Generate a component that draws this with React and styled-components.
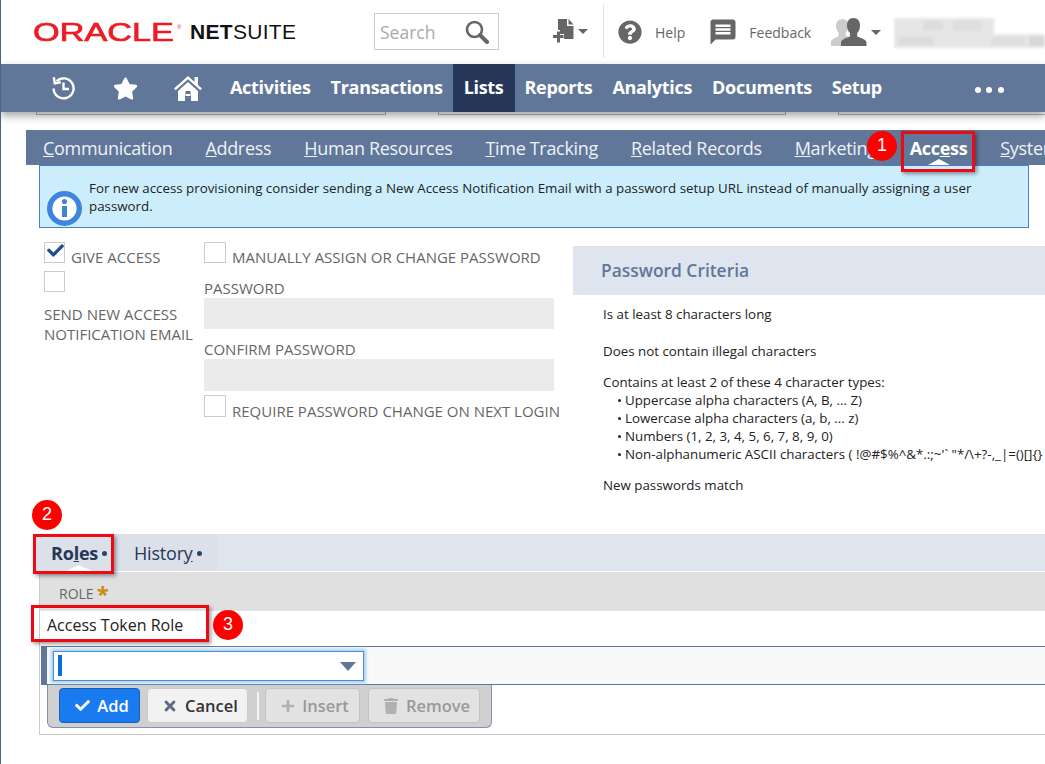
import React from 'react';
import styled, { createGlobalStyle } from 'styled-components';
import { FaStar, FaCheck, FaTimes, FaPlus, FaTrash, FaQuestionCircle } from 'react-icons/fa';
import { MdMessage } from 'react-icons/md';

const Global = createGlobalStyle`
  html, body { margin: 0; padding: 0; background: #fff; }
  * { box-sizing: border-box; }
  body { font-family: "Open Sans", "Noto Sans", sans-serif; }
`;

const Page = styled.div`
  position: relative;
  width: 1045px;
  height: 764px;
  overflow: hidden;
  background: #fff;
  border-left: 1px solid #4d6480;
`;

/* ---------- top header ---------- */
const Header = styled.header`
  display: flex;
  align-items: center;
  height: 64px;
  color: #666;
`;
const Logo = styled.div`
  display: flex;
  align-items: center;
  width: 373px;
  padding-left: 32px;
  flex: none;
`;
const OracleWord = styled.span`
  display: block;
  width: 144px;
  flex: none;
  font-family: "Liberation Sans", Arial, sans-serif;
  font-size: 25px;
  line-height: 24px;
  color: #ed1c24;
  -webkit-text-stroke: 0.7px #ed1c24;
  transform: scaleX(1.37);
  transform-origin: left center;
`;
const Registered = styled.span`
  width: 13px;
  flex: none;
  align-self: flex-start;
  font-family: "Liberation Sans", Arial, sans-serif;
  font-size: 6px;
  line-height: 14px;
  color: #ed1c24;
`;
const SuiteWord = styled.span`
  font-family: "Liberation Sans", Arial, sans-serif;
  font-size: 21px;
  line-height: 24px;
  letter-spacing: 0.3px;
  color: #111;
  b { font-weight: 700; }
`;
const SearchBox = styled.div`
  display: flex;
  align-items: center;
  justify-content: space-between;
  width: 125px;
  height: 37px;
  flex: none;
  margin-top: -1px;
  padding: 0 9px 0 5px;
  border: 1px solid #ccc;
  font-size: 17.5px;
  color: #aaa;
`;
const NewBlock = styled.div`
  display: flex;
  align-items: center;
  margin-left: 54px;
  width: 51px;
  height: 53px;
  flex: none;
  border-right: 1px solid #e2e2e2;
  margin-top: -1px;
`;
const Caret = styled.span`
  width: 0;
  height: 0;
  margin-left: ${p => p.$gap || 1}px;
  border-left: 5px solid transparent;
  border-right: 5px solid transparent;
  border-top: 5px solid #666;
`;
const HeadLink = styled.div`
  display: flex;
  align-items: center;
  gap: ${p => p.$gap}px;
  margin-left: ${p => p.$left}px;
  font-size: 14px;
  color: #666;
  flex: none;
`;
const UserBlock = styled.div`
  display: flex;
  align-items: center;
  margin-left: 20px;
  flex: none;
`;
const Blurred = styled.svg`
  display: block;
  margin-left: 12px;
  flex: none;
`;

/* ---------- main nav ---------- */
const Nav = styled.nav`
  position: relative;
  z-index: 2;
  display: flex;
  align-items: stretch;
  height: 48px;
  background: #607799;
  box-shadow: 0 4px 8px rgba(0, 0, 0, 0.35);
  padding-left: 44px;
`;
const NavIcon = styled.div`
  display: flex;
  align-items: center;
  justify-content: center;
  width: ${p => p.$w}px;
  margin-right: ${p => p.$mr || 0}px;
  color: #fff;
  flex: none;
`;
const NavItem = styled.div`
  display: flex;
  align-items: center;
  padding: 0 ${p => (p.$active ? 11 : 10)}px 2px;
  font-size: 18px;
  font-weight: 700;
  letter-spacing: -0.3px;
  color: #fff;
  background: ${p => (p.$active ? '#26375a' : 'transparent')};
`;
const Dots = styled.div`
  display: flex;
  align-items: center;
  gap: 5.5px;
  margin-left: 83px;
  padding-top: 4px;
  span {
    width: 6px;
    height: 6px;
    border-radius: 50%;
    background: #fff;
  }
`;
const Peek = styled.div`
  display: flex;
  height: 3px;
  padding-left: 35px;
  gap: 52px;
`;
const PeekBox = styled.div`
  width: ${p => p.$w}px;
  flex: none;
  border: 1px solid #b5b5b5;
  border-top: 0;
`;

/* ---------- record sub tabs ---------- */
const Tabs = styled.div`
  display: flex;
  align-items: center;
  gap: 33px;
  height: 35px;
  margin: 15px 0 0 25px;
  padding-left: 17px;
  background: #607799;
  white-space: nowrap;
  overflow: hidden;
`;
const Tab = styled.div`
  position: relative;
  height: 35px;
  line-height: 36px;
  font-size: 18px;
  letter-spacing: -0.32px;
  font-weight: ${p => (p.$active ? 700 : 400)};
  color: ${p => (p.$active ? '#fff' : '#eef1f6')};
  ${p => p.$active && `
    &::after {
      content: '';
      position: absolute;
      left: 18px;
      bottom: 0;
      border-left: 11px solid transparent;
      border-right: 11px solid transparent;
      border-bottom: 6px solid #fff;
    }
  `}
`;
const InfoBox = styled.div`
  position: relative;
  height: 63px;
  width: 990px;
  margin-left: 38px;
  padding: 13px 20px 0 49px;
  background: #cceefc;
  border: 1px solid #4a7fcf;
  font-size: 13.33px;
  line-height: 18px;
  color: #222;
`;
const InfoIcon = styled.svg`
  position: absolute;
  left: 7px;
  top: 25px;
`;

/* ---------- form ---------- */
const Form = styled.section`
  display: flex;
  height: 306px;
`;
const ColA = styled.div`
  width: 160px;
  margin-left: 43px;
  padding-top: 14px;
  flex: none;
`;
const ColB = styled.div`
  width: 357px;
  padding-top: 14px;
  flex: none;
`;
const CheckRow = styled.div`
  display: flex;
  align-items: flex-end;
  gap: 6px;
  height: ${p => p.$h || 21}px;
  margin-top: ${p => p.$mt || 0}px;
`;
const Check = styled.div`
  position: relative;
  width: ${p => p.$w || 21}px;
  height: ${p => p.$h || 21}px;
  flex: none;
  border: 1px solid #ccc;
  background: #fff;
  color: #1f4f8f;
  svg { position: absolute; left: 2px; top: -1px; }
`;
const CheckLabel = styled.span`
  font-size: 15px;
  line-height: 20px;
  color: #666;
  white-space: nowrap;
  transform: translateY(4px);
`;
const FieldLabel = styled.div`
  margin-top: ${p => p.$mt || 0}px;
  font-size: 15px;
  line-height: 20px;
  color: #666;
  white-space: nowrap;
`;
const Field = styled.div`
  width: 350px;
  height: ${p => p.$h}px;
  background: #ebebeb;
`;
const Criteria = styled.aside`
  flex: 1;
  margin: 18px 0 0 12px;
  min-width: 0;
`;
const CriteriaHead = styled.div`
  display: flex;
  align-items: center;
  height: 49px;
  padding: 0 0 2px 28px;
  background: #dfe5ef;
  font-size: 17.4px;
  font-weight: 600;
  color: #607799;
`;
const CriteriaBody = styled.div`
  padding: 10px 0 0 30px;
  font-size: 13.33px;
  line-height: 18px;
  color: #222;
  white-space: nowrap;
`;
const Line = styled.div`
  margin-top: ${p => p.$mt || 0}px;
`;
const Bullet = styled.div`
  position: relative;
  padding-left: 22px;
  &::before {
    content: '';
    position: absolute;
    left: 15px;
    top: 8px;
    width: 3px;
    height: 3px;
    border-radius: 50%;
    background: #222;
  }
`;

/* ---------- roles machine ---------- */
const SubTabs = styled.div`
  display: flex;
  height: 37px;
  margin-left: 32px;
  background: #dfe5ef;
`;
const SubTab = styled.div`
  position: relative;
  display: flex;
  align-items: center;
  height: 37px;
  width: ${p => p.$w}px;
  padding-left: ${p => p.$pl}px;
  background: #dce0e8;
  font-size: 18px;
  letter-spacing: -0.2px;
  font-weight: ${p => (p.$active ? 700 : 400)};
  color: #26375a;
  i {
    width: 5px;
    height: 5px;
    margin-left: 4px;
    margin-top: 2px;
    border-radius: 50%;
    background: #2d4266;
  }
  ${p => p.$active && `
    &::after {
      content: '';
      position: absolute;
      left: 33px;
      bottom: 0;
      border-left: 13px solid transparent;
      border-right: 13px solid transparent;
      border-bottom: 6px solid #fff;
    }
  `}
`;
const Machine = styled.div`
  height: 163px;
  margin: 1px 0 0 38px;
  border-left: 1px solid #ccc;
  border-bottom: 1px solid #ccc;
`;
const ColHead = styled.div`
  display: flex;
  align-items: center;
  height: 39px;
  padding: 4px 0 0 19px;
  background: #e0e0e0;
  font-size: 14px;
  color: #666;
  b {
    align-self: flex-start;
    margin: 6px 0 0 3px;
    font-size: 22px;
    line-height: 22px;
    font-weight: 700;
    color: #c98a10;
  }
`;
const DataRow = styled.div`
  height: 35px;
  padding-left: 7px;
  font-size: 16px;
  line-height: 28px;
  color: #222;
`;
const EditRow = styled.div`
  display: flex;
  align-items: center;
  height: 39px;
  margin-left: 1px;
  padding-left: 6px;
  border-top: 1px solid #607799;
  border-bottom: 1px solid #607799;
  border-left: 6px solid #607799;
  background: #f9f9f9;
`;
const Select = styled.div`
  position: relative;
  width: 311px;
  height: 30px;
  background: #fff;
  border: 1px solid #4a90d9;
  box-shadow: 0 0 3px 2px #a4cdf5;
  &::before {
    content: '';
    position: absolute;
    left: 4px;
    top: 3px;
    width: 4px;
    height: 21px;
    background: #0a70d6;
  }
  &::after {
    content: '';
    position: absolute;
    right: 7px;
    top: 10px;
    border-left: 8px solid transparent;
    border-right: 8px solid transparent;
    border-top: 9px solid #607799;
  }
`;
const ButtonBar = styled.div`
  display: flex;
  align-items: center;
  width: 445px;
  height: 43px;
  margin-left: 7px;
  padding: 0 10px 1px 11px;
  background: #d0d0d0;
  border: 1px solid #7f92b0;
  border-top: 0;
  border-radius: 0 0 6px 6px;
`;
const Btn = styled.div`
  display: flex;
  align-items: center;
  justify-content: center;
  gap: 7px;
  width: ${p => p.$w}px;
  height: 35px;
  padding-left: 5px;
  margin-right: ${p => p.$mr || 7}px;
  flex: none;
  border-radius: 4px;
  border: 1px solid ${p => (p.$kind === 'primary' ? '#1560b8' : p.$kind === 'off' ? '#c4c4c4' : '#ccc')};
  background: ${p => (p.$kind === 'primary' ? '#1a7bf0' : p.$kind === 'off' ? '#e2e2e2' : '#f2f2f2')};
  color: ${p => (p.$kind === 'primary' ? '#fff' : p.$kind === 'off' ? '#999' : '#333')};
  font-size: 16.5px;
  font-weight: 600;
  svg { color: ${p => (p.$kind === 'primary' ? '#fff' : p.$kind === 'off' ? '#b0b0b0' : '#5c6b80')}; }
`;
const BtnSep = styled.div`
  width: 2px;
  height: 28px;
  margin: 0 6px 0 1px;
  flex: none;
  background: #f5f5f5;
`;

/* ---------- call-outs drawn over the screenshot ---------- */
const RedBox = styled.div`
  position: absolute;
  z-index: 5;
  left: ${p => p.$x}px;
  top: ${p => p.$y}px;
  width: ${p => p.$w}px;
  height: ${p => p.$h}px;
  border: 3px solid #ee0a14;
  box-shadow: 2px 2px 4px rgba(0, 0, 0, 0.4);
`;
const Badge = styled.div`
  position: absolute;
  z-index: 6;
  left: ${p => p.$x}px;
  top: ${p => p.$y}px;
  width: 30px;
  height: 30px;
  border-radius: 50%;
  background: #ff0000;
  color: #fff;
  font-family: "Liberation Sans", Arial, sans-serif;
  font-size: 18px;
  line-height: 29px;
  text-align: center;
`;

const HistoryIcon = () => (
  <svg width="25" height="26" viewBox="0 0 25 26" fill="none" stroke="#fff" strokeWidth="2.4">
    <path d="M5.6 6.2A10 10 0 1 1 2.6 13.500" />
    <path d="M2.800 2.200l1 6.200 6-1.200" strokeWidth="2.400" />
    <path d="M12.500 7.500v6.500h5.500" strokeWidth="2.400" />
  </svg>
);
const HomeIcon = () => (
  <svg width="28" height="25" viewBox="0 0 28 25" fill="#fff">
    <path d="M14 0L0 12.500l1.600 1.800L14 3.300l12.400 11 1.600-1.800-4-3.500V1h-3.500v5z" />
    <path d="M14 6L4 15v10h7v-7h6v7h7V15z M11.500 15h5v5h-5z" fillRule="evenodd" />
  </svg>
);
const SearchIcon = () => (
  <svg width="24" height="24" viewBox="0 0 24 24" fill="none" stroke="#666">
    <circle cx="9.500" cy="9.500" r="7.500" strokeWidth="2.600" />
    <path d="M15 15l7 7" strokeWidth="4" strokeLinecap="round" />
  </svg>
);
const NewDocIcon = () => (
  <svg width="24" height="25" viewBox="0 0 24 25" fill="#666">
    <path d="M5 0h9v7h6.500v13H11v-5H7v-4H5z" />
    <path d="M15.500 0l5 5.500h-5z" />
    <path d="M4 12.500h3V16h3.500v3H7v4.500H4V19H0v-3h4z" />
  </svg>
);
const UsersIcon = () => (
  <svg width="36" height="28" viewBox="0 0 36 28">
    <path fill="#ccc" d="M11.500 1c4 0 6 3 6 6.500 0 3-1.200 5.500-2.700 7v3l3 1.500V28H0v-4c0-2.500 3-3.500 7.500-5.500v-4c-1.500-1.500-2.500-4-2.500-7C5 4 7.500 1 11.500 1z" />
    <path fill="#666" d="M22.500 0C27 0 29 3.300 29 7.500c0 3.200-1.200 6-2.800 7.500v3.500c4 1.700 9.300 3 9.300 6V28H10v-3.500c0-3 5-4.300 9-6V15c-1.600-1.500-3-4.300-3-7.500C16 3.300 18 0 22.500 0z" />
  </svg>
);
const InfoGlyph = () => (
  <InfoIcon width="35" height="35" viewBox="0 0 35 35">
    <circle cx="17.500" cy="17.500" r="14.800" fill="#fff" stroke="#3f85dc" strokeWidth="5.400" />
    <circle cx="17.500" cy="10.500" r="2.600" fill="#3f85dc" />
    <rect x="15" y="15" width="5" height="11" fill="#3f85dc" />
  </InfoIcon>
);
const Blur = () => (
  <Blurred width="152" height="40" viewBox="0 0 152 40">
    <defs>
      <filter id="soft"><feGaussianBlur stdDeviation="1.800" /></filter>
    </defs>
    <g filter="url(#soft)">
      <rect x="1" y="6" width="100" height="16" fill="#e6e6e6" />
      <rect x="1" y="22" width="151" height="14" fill="#e6e6e6" />
      <rect x="30" y="9" width="20" height="9" fill="#dcdcdc" />
      <rect x="60" y="8" width="28" height="11" fill="#dedede" />
      <rect x="6" y="25" width="34" height="8" fill="#dcdcdc" />
      <rect x="98" y="25" width="34" height="8" fill="#dedede" />
      <rect x="136" y="24" width="16" height="10" fill="#d8d8d8" />
    </g>
  </Blurred>
);

const tabs = [
  ['C', 'ommunication'], ['A', 'ddress'], ['H', 'uman Resources'],
  ['T', 'ime Tracking'], ['R', 'elated Records'], ['M', 'arketing'],
];
const navs = ['Activities', 'Transactions', 'Lists', 'Reports', 'Analytics', 'Documents', 'Setup'];

export default function App() {
  return (
    <Page>
      <Global />
      <Header>
        <Logo>
          <OracleWord>ORACLE</OracleWord>
          <Registered>®</Registered>
          <SuiteWord><b>NET</b>SUITE</SuiteWord>
        </Logo>
        <SearchBox>Search<SearchIcon /></SearchBox>
        <NewBlock><NewDocIcon /><Caret /></NewBlock>
        <HeadLink $left={14} $gap={13}><FaQuestionCircle size={24} color="#666" />Help</HeadLink>
        <HeadLink $left={23} $gap={11}><MdMessage size={30} color="#666" />Feedback</HeadLink>
        <UserBlock><UsersIcon /><Caret $gap={4} /></UserBlock>
        <Blur />
      </Header>
      <Nav>
        <NavIcon $w={36}><HistoryIcon /></NavIcon>
        <NavIcon $w={88}><FaStar size={25} /></NavIcon>
        <NavIcon $w={38} $mr={13}><HomeIcon /></NavIcon>
        {navs.map(n => <NavItem key={n} $active={n === 'Lists'}>{n}</NavItem>)}
        <Dots><span /><span /><span /></Dots>
      </Nav>
      <Peek>
        <PeekBox $w={350} />
        <PeekBox $w={348} />
        <PeekBox $w={300} />
      </Peek>
      <Tabs>
        {tabs.map(([a, b]) => <Tab key={a}><u>{a}</u>{b}</Tab>)}
        <Tab $active>Acc<u>e</u>ss</Tab>
        <Tab><u>S</u>ystem</Tab>
      </Tabs>
      <InfoBox>
        <InfoGlyph />
        For new access provisioning consider sending a New Access Notification Email with a password setup URL instead of manually assigning a user password.
      </InfoBox>
      <Form>
        <ColA>
          <CheckRow>
            <Check><FaCheck size={17} /></Check>
            <CheckLabel>GIVE ACCESS</CheckLabel>
          </CheckRow>
          <CheckRow $mt={8}><Check /></CheckRow>
          <FieldLabel $mt={12}>SEND NEW ACCESS<br />NOTIFICATION EMAIL</FieldLabel>
        </ColA>
        <ColB>
          <CheckRow>
            <Check $w={22} />
            <CheckLabel>MANUALLY ASSIGN OR CHANGE PASSWORD</CheckLabel>
          </CheckRow>
          <FieldLabel $mt={15}>PASSWORD</FieldLabel>
          <Field $h={31} />
          <FieldLabel $mt={10}>CONFIRM PASSWORD</FieldLabel>
          <Field $h={32} />
          <CheckRow $mt={4} $h={22}>
            <Check $w={22} $h={22} />
            <CheckLabel>REQUIRE PASSWORD CHANGE ON NEXT LOGIN</CheckLabel>
          </CheckRow>
        </ColB>
        <Criteria>
          <CriteriaHead>Password Criteria</CriteriaHead>
          <CriteriaBody>
            <Line>Is at least 8 characters long</Line>
            <Line $mt={19}>Does not contain illegal characters</Line>
            <Line $mt={13}>Contains at least 2 of these 4 character types:</Line>
            <Bullet>Uppercase alpha characters (A, B, ... Z)</Bullet>
            <Bullet>Lowercase alpha characters (a, b, ... z)</Bullet>
            <Bullet>Numbers (1, 2, 3, 4, 5, 6, 7, 8, 9, 0)</Bullet>
            <Bullet>{'Non-alphanumeric ASCII characters ( !@#$%^&*.:;~\'` "*/\\+?-,_|=()[]{}'}</Bullet>
            <Line $mt={13}>New passwords match</Line>
          </CriteriaBody>
        </Criteria>
      </Form>
      <SubTabs>
        <SubTab $active $w={85} $pl={18}>Ro<u>l</u>es<i /></SubTab>
        <SubTab $w={99} $pl={16}>Histor<u>y</u><i /></SubTab>
      </SubTabs>
      <Machine>
        <ColHead>ROLE<b>*</b></ColHead>
        <DataRow>Access Token Role</DataRow>
        <EditRow><Select /></EditRow>
        <ButtonBar>
          <Btn $kind="primary" $w={81}><FaCheck size={15} />Add</Btn>
          <Btn $w={101} $mr={8}><FaTimes size={16} />Cancel</Btn>
          <BtnSep />
          <Btn $kind="off" $w={95} $mr={8}><FaPlus size={14} />Insert</Btn>
          <Btn $kind="off" $w={112} $mr={0}><FaTrash size={16} />Remove</Btn>
        </ButtonBar>
      </Machine>

      <RedBox $x={900} $y={131} $w={74} $h={41} />
      <Badge $x={866} $y={131}>1</Badge>
      <RedBox $x={32} $y={534} $w={81} $h={40} />
      <Badge $x={31} $y={500}>2</Badge>
      <RedBox $x={30} $y={605} $w={178} $h={37} />
      <Badge $x={212} $y={610}>3</Badge>
    </Page>
  );
}
